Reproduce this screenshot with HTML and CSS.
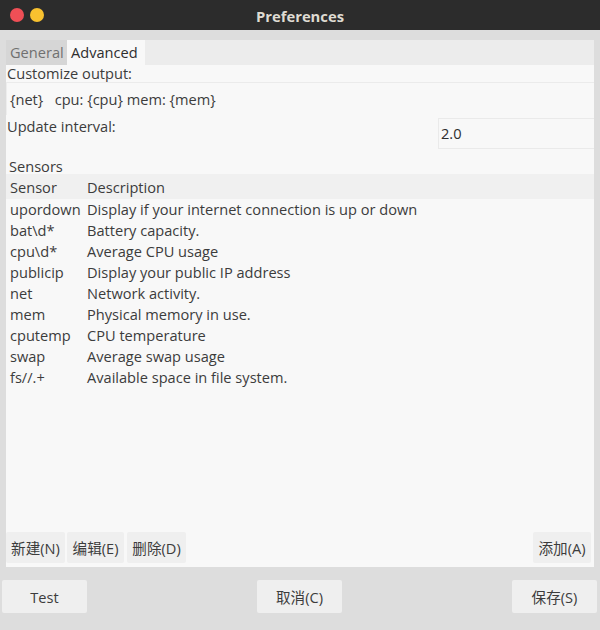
FILE: index.html
```html
<!DOCTYPE html>
<html>
<head>
<meta charset="utf-8">
<link rel="stylesheet" href="styles.css">
</head>
<body>
<div class="titlebar">
  <div class="lights"><span class="light red"></span><span class="light yellow"></span></div>
  <div class="title">Preferences</div>
</div>
<div class="window">
  <div class="panel">
    <div class="tabs">
      <div class="tab inactive">General</div>
      <div class="tab active">Advanced</div>
    </div>
    <div class="page">
      <div class="label first">Customize output:</div>
      <div class="output">{net}&nbsp;&nbsp;&nbsp;cpu: {cpu} mem: {mem}</div>
      <div class="interval">
        <div class="label">Update interval:</div>
        <div class="spin">2.0</div>
      </div>
      <div class="label sensors">Sensors</div>
      <div class="table">
        <div class="row head"><span class="c1">Sensor</span><span class="c2">Description</span></div>
        <div class="rows">
          <div class="row"><span class="c1">upordown</span><span class="c2">Display if your internet connection is up or down</span></div>
          <div class="row"><span class="c1">bat\d*</span><span class="c2">Battery capacity.</span></div>
          <div class="row"><span class="c1">cpu\d*</span><span class="c2">Average CPU usage</span></div>
          <div class="row"><span class="c1">publicip</span><span class="c2">Display your public IP address</span></div>
          <div class="row"><span class="c1">net</span><span class="c2">Network activity.</span></div>
          <div class="row"><span class="c1">mem</span><span class="c2">Physical memory in use.</span></div>
          <div class="row"><span class="c1">cputemp</span><span class="c2">CPU temperature</span></div>
          <div class="row"><span class="c1">swap</span><span class="c2">Average swap usage</span></div>
          <div class="row"><span class="c1">fs//.+</span><span class="c2">Available space in file system.</span></div>
        </div>
      </div>
      <div class="tools">
        <div class="btn small b-new">新建(N)</div>
        <div class="btn small b-edit">编辑(E)</div>
        <div class="btn small b-del">删除(D)</div>
        <div class="spacer"></div>
        <div class="btn small b-add">添加(A)</div>
      </div>
    </div>
  </div>
  <div class="actions">
    <div class="btn big">Test</div>
    <div class="btn big">取消(C)</div>
    <div class="btn big">保存(S)</div>
  </div>
</div>
</body>
</html>
```
FILE: styles.css
```css
* { box-sizing: border-box; }
html, body { margin: 0; padding: 0; }
body {
  width: 600px;
  height: 630px;
  background: #dddddd;
  font-family: "Open Sans", "Noto Sans CJK SC", sans-serif;
  font-size: 14.6px;
  color: #3c3c3c;
  overflow: hidden;
}
.titlebar {
  height: 30px;
  background: #2c2c2c;
  position: relative;
  display: flex;
  align-items: center;
  justify-content: center;
}
.lights {
  position: absolute;
  left: 10px;
  top: 8px;
  display: flex;
  gap: 6px;
}
.light {
  width: 14px;
  height: 14px;
  border-radius: 50%;
  display: block;
}
.red { background: #ef4f56; }
.yellow { background: #f8c12f; }
.title {
  color: #dfdbd2;
  font-weight: bold;
  font-size: 14.8px;
  margin-top: 1px;
}
.window {
  padding: 10px 6px 0 6px;
}
.panel {
  height: 527px;
  background: #f8f8f8;
  display: flex;
  flex-direction: column;
}
.tabs {
  height: 25px;
  background: #ececec;
  display: flex;
}
.tab {
  line-height: 25px;
  padding: 0 0 0 4px;
  white-space: nowrap;
}
.tab.inactive { background: #d6d6d6; color: #707070; width: 61px; }
.tab.active { background: #f8f8f8; color: #2e2e2e; width: 78px; }
.page {
  flex: 1;
  display: flex;
  flex-direction: column;
}
.label { padding-left: 1px; }
.label.first { height: 17px; line-height: 17px; }
.output {
  height: 33px;
  border-top: 1px solid #ebebeb;
  border-left: 1px solid #ededed;
  line-height: 32px;
  padding-left: 3px;
}
.interval {
  display: flex;
  justify-content: space-between;
  height: 41px;
}
.interval .label { line-height: 23px; }
.spin {
  margin-top: 3px;
  width: 156px;
  height: 31px;
  border: 1px solid #eaeaea;
  border-right: none;
  line-height: 29px;
  padding-left: 2px;
  color: #2e2e2e;
}
.sensors {
  height: 18px;
  line-height: 20px;
  padding-left: 3px;
}
.table {
  display: flex;
  flex-direction: column;
  height: 354px;
  flex: none;
}
.row {
  display: flex;
  height: 21px;
  line-height: 21px;
  white-space: nowrap;
}
.row.head {
  height: 25px;
  line-height: 26px;
  background: #f0f0f0;
}
.c1 { width: 81px; padding-left: 4px; }
.c2 { flex: 1; }
.tools {
  flex: 1;
  display: flex;
  align-items: flex-end;
  padding: 0 3px 4px 0;
  gap: 1px;
}
.spacer { flex: 1; }
.btn {
  background: #efefef;
  border-radius: 2px;
  display: flex;
  align-items: center;
  justify-content: center;
  white-space: nowrap;
}
.btn.small { height: 31px; padding: 0; }
.b-new { width: 59px; }
.b-edit { width: 57px; margin-left: 1px; }
.b-del { width: 59px; margin-left: 2px; }
.b-add { width: 58px; }
.actions {
  margin: 13px -3px 0 -4px;
  display: flex;
  justify-content: space-between;
}
.btn.big { width: 85px; height: 33px; }
```
